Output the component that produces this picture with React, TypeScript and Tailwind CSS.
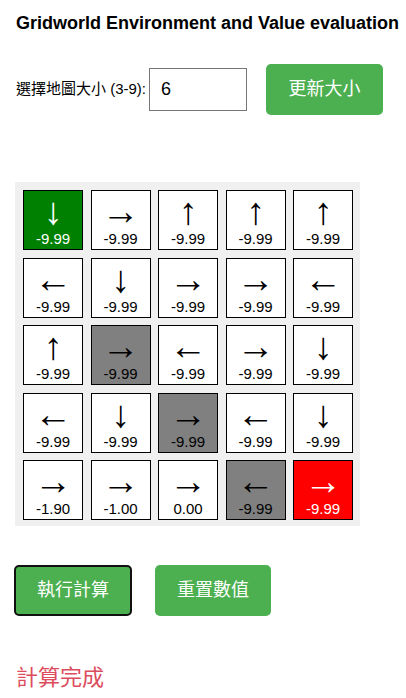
import React from "react";

type Cell = { a: string; v: string; bg?: "green" | "gray" | "red" };

const rows: Cell[][] = [
  [
    { a: "↓", v: "-9.99", bg: "green" },
    { a: "→", v: "-9.99" },
    { a: "↑", v: "-9.99" },
    { a: "↑", v: "-9.99" },
    { a: "↑", v: "-9.99" },
  ],
  [
    { a: "←", v: "-9.99" },
    { a: "↓", v: "-9.99" },
    { a: "→", v: "-9.99" },
    { a: "→", v: "-9.99" },
    { a: "←", v: "-9.99" },
  ],
  [
    { a: "↑", v: "-9.99" },
    { a: "→", v: "-9.99", bg: "gray" },
    { a: "←", v: "-9.99" },
    { a: "→", v: "-9.99" },
    { a: "↓", v: "-9.99" },
  ],
  [
    { a: "←", v: "-9.99" },
    { a: "↓", v: "-9.99" },
    { a: "→", v: "-9.99", bg: "gray" },
    { a: "←", v: "-9.99" },
    { a: "↓", v: "-9.99" },
  ],
  [
    { a: "→", v: "-1.90" },
    { a: "→", v: "-1.00" },
    { a: "→", v: "0.00" },
    { a: "←", v: "-9.99", bg: "gray" },
    { a: "→", v: "-9.99", bg: "red" },
  ],
];

function GridCell({ c }: { c: Cell }) {
  const cls =
    c.bg === "green"
      ? "bg-[#008000] text-white"
      : c.bg === "red"
      ? "bg-[#ff0000] text-white"
      : c.bg === "gray"
      ? "bg-[#808080] text-black"
      : "bg-white text-black";
  return (
    <div
      className={`w-[60px] h-[60px] border border-black flex flex-col items-center ${cls}`}
    >
      <div className="h-[36px] mt-[2px] text-center text-[38px] leading-[36px] font-['Liberation_Sans',Arial,sans-serif]">
        {c.a}
      </div>
      <div className="text-[15px] leading-[17px] mt-px font-['Liberation_Sans',Arial,sans-serif]">
        {c.v}
      </div>
    </div>
  );
}

export default function App() {
  const cjk = "font-['Liberation_Sans','Noto_Sans_CJK_TC',sans-serif]";
  return (
    <div className={`px-4 ${cjk} text-black bg-white min-h-[698px]`}>
      <div className="pt-[13px] text-[18px] leading-[20px] font-bold whitespace-nowrap font-['Liberation_Sans',Arial,sans-serif]">
        Gridworld Environment and Value evaluation
      </div>
      <div className="mt-[31px] flex items-center">
        <span className="text-[15px]">選擇地圖大小 (3-9):</span>
        <div className="ml-[3px] w-[98px] h-[43px] border border-[#767676] flex items-center pl-[11px] text-[18px]">
          6
        </div>
        <button className="ml-[19px] w-[117px] h-[51px] rounded-[5px] bg-[#4caf50] text-white text-[18px]">
          更新大小
        </button>
      </div>
      <div className="mt-[67px] -ml-px inline-grid grid-cols-5 gap-[7.5px] bg-[#f0f0f0] pl-2 pt-2 pr-[7px] pb-[6px]">
        {rows.flat().map((c, i) => (
          <GridCell key={i} c={c} />
        ))}
      </div>
      <div className="mt-[39px] -ml-[2px] flex gap-[23px]">
        <button className="w-[118px] h-[51px] rounded-[5px] bg-[#4caf50] text-white text-[18px] border-2 border-[#111]">
          執行計算
        </button>
        <button className="w-[116px] h-[51px] rounded-[5px] bg-[#4caf50] text-white text-[18px]">
          重置數值
        </button>
      </div>
      <div className="mt-[47px] text-[22px] leading-[30px] text-[#dc4c5c]">計算完成</div>
    </div>
  );
}
